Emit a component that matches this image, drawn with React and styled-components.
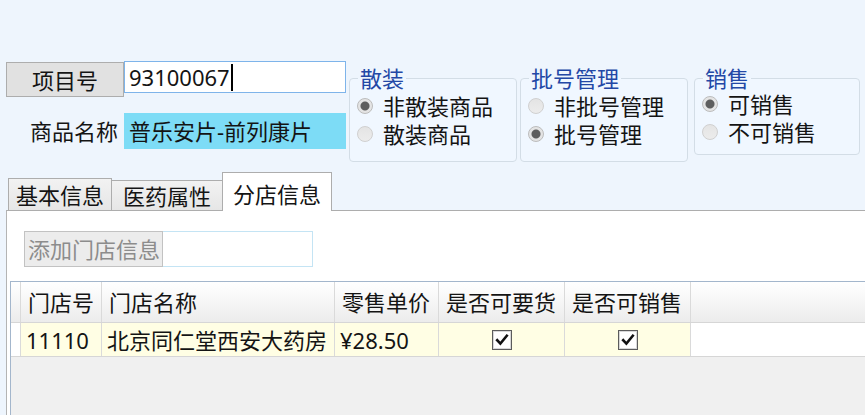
import React from "react";
import styled, { createGlobalStyle } from "styled-components";

const Global = createGlobalStyle`
  html, body { margin: 0; padding: 0; }
  body { font-family: "Noto Sans", "Noto Sans CJK SC", sans-serif; color: #1b1b1b; }
  * { box-sizing: border-box; }
`;

const FONT = `"Noto Sans", "Noto Sans CJK SC", sans-serif`;

const Root = styled.div`
  width: 865px;
  height: 415px;
  overflow: hidden;
  background: #eef5fd;
  display: flex;
  flex-direction: column;
  font-family: ${FONT};
  font-size: 22px;
  line-height: 26px;
  color: #141414;
`;

const TopSection = styled.div`
  height: 173px;
  flex: none;
  display: flex;
  align-items: flex-start;
  padding: 61px 0 0 6px;
`;

const LeftForm = styled.div`
  width: 340px;
  display: flex;
  flex-direction: column;
  gap: 16px;
`;

const FormRow = styled.div`
  display: flex;
  align-items: flex-start;
`;

const KeyButton = styled.div`
  width: 118px;
  height: 35px;
  margin-top: 1px;
  background: #e1e1e1;
  border: 1px solid #adadad;
  display: flex;
  align-items: center;
  justify-content: center;
`;

const CodeBox = styled.div`
  width: 222px;
  height: 32px;
  background: #fff;
  border: 1px solid #7eb4ea;
  display: flex;
  align-items: center;
  padding-left: 4px;
`;

const Caret = styled.span`
  width: 2px;
  height: 27px;
  background: #000;
  margin-left: 1px;
`;

const NameLabel = styled.div`
  width: 118px;
  height: 36px;
  display: flex;
  align-items: center;
  justify-content: flex-end;
  padding-right: 6px;
`;

const NameBox = styled.div`
  width: 222px;
  height: 36px;
  background: #7ddcf6;
  display: flex;
  align-items: center;
  padding-left: 5px;
`;

const Groups = styled.div`
  display: flex;
  align-items: flex-start;
  margin-left: 3px;
  margin-top: 5px;
`;

const GroupBox = styled.fieldset`
  width: ${(p) => p.$w}px;
  margin: 0 0 0 ${(p) => p.$gap}px;
  padding: ${(p) => p.$top}px 0 ${(p) => p.$bottom}px 7px;
  border: 1px solid #d3dde6;
  border-radius: 4px;
  background: #f0f7ff;
  min-width: 0;
`;

const Legend = styled.legend`
  margin-left: 1px;
  padding: 0 2px;
  font-size: 22px;
  line-height: 24px;
  color: #2348a6;
`;

const RadioRow = styled.div`
  height: 28px;
  display: flex;
  align-items: center;
  gap: 10px;
  white-space: nowrap;
`;

const RadioDot = styled.span`
  width: 16px;
  height: 16px;
  border-radius: 50%;
  flex: none;
  border: 1px solid ${(p) => (p.$on ? "#bcbcbc" : "#d0d0d0")};
  background: ${(p) =>
    p.$on
      ? "radial-gradient(circle, #5e5e5e 0, #5e5e5e 4px, #e4e4e4 5px)"
      : "linear-gradient(#e4e4e4, #ececec)"};
`;

const TabStrip = styled.div`
  height: 37px;
  flex: none;
  display: flex;
  align-items: flex-end;
  padding-left: 8px;
`;

const Tab = styled.div`
  position: relative;
  z-index: ${(p) => (p.$active ? 1 : 0)};
  height: ${(p) => (p.$active ? 39 : p.$h)}px;
  margin-bottom: ${(p) => (p.$active ? -1 : 0)}px;
  padding: 0 ${(p) => p.$pad}px;
  border: 1px solid #adadad;
  border-bottom: none;
  margin-left: ${(p) => (p.$first ? 0 : -1)}px;
  background: ${(p) => (p.$active ? "#fff" : "linear-gradient(#f2f2f2, #e6e6e6)")};
  display: flex;
  align-items: ${(p) => (p.$active ? "flex-start" : "center")};
  padding-top: ${(p) => (p.$active ? 8 : 0)}px;
  white-space: nowrap;
`;

const TabPage = styled.div`
  flex: 1;
  display: flex;
  flex-direction: column;
  margin-left: 6px;
  background: #fff;
  border-top: 1px solid #adadad;
  border-left: 1px solid #b4b4b4;
  padding: 20px 0 0 3px;
  min-height: 0;
`;

const AddRow = styled.div`
  display: flex;
  margin-left: 14px;
`;

const AddButton = styled.div`
  width: 139px;
  height: 36px;
  background: #ececec;
  border: 1px solid #c2c2c2;
  color: #8c8c8c;
  display: flex;
  align-items: center;
  padding-left: 3px;
  white-space: nowrap;
`;

const AddInput = styled.div`
  width: 150px;
  height: 36px;
  background: #fff;
  border: 1px solid #c4e4f4;
  border-left: none;
`;

const Grid = styled.div`
  flex: 1;
  margin-top: 14px;
  background: #f0f0f0;
  border-top: 1px solid #a3b6cc;
  border-left: 1px solid #a3b6cc;
  display: flex;
  flex-direction: column;
`;

const GridRow = styled.div`
  display: flex;
  height: ${(p) => p.$h}px;
  border-bottom: 1px solid #d6d6d6;
  background: ${(p) => (p.$head ? "linear-gradient(#ffffff 0%, #f7f7f7 45%, #ececec 100%)" : "#fff")};
`;

const Cell = styled.div`
  width: ${(p) => p.$w}px;
  flex: none;
  border-right: 1px solid #dadada;
  display: flex;
  align-items: center;
  justify-content: ${(p) => (p.$center ? "center" : "flex-start")};
  padding-left: ${(p) => (p.$center ? 0 : p.$pl ?? 7)}px;
  background: ${(p) => (p.$yellow ? "#fffee4" : "transparent")};
  white-space: nowrap;
`;

const Filler = styled.div`
  flex: 1;
`;

const CheckBox = styled.span`
  width: 20px;
  height: 20px;
  border: 1px solid #5c5c5c;
  box-shadow: inset 0 0 0 1px #d8d8d8;
  background: #fff;
  display: flex;
  align-items: center;
  justify-content: center;
`;

const Check = () => (
  <CheckBox>
    <svg width="14" height="14" viewBox="0 0 14 14">
      <path d="M2.2 7.2 L5.4 10.6 L11.8 2.8" fill="none" stroke="#111" strokeWidth="2.6" strokeLinecap="square" />
    </svg>
  </CheckBox>
);

const Radio = ({ on, children }) => (
  <RadioRow>
    <RadioDot $on={on} />
    {children}
  </RadioRow>
);

const cols = [
  { key: "id", title: "门店号", w: 81 },
  { key: "name", title: "门店名称", w: 233 },
  { key: "price", title: "零售单价", w: 104 },
  { key: "order", title: "是否可要货", w: 126 },
  { key: "sale", title: "是否可销售", w: 126 },
];

const row = { id: "11110", name: "北京同仁堂西安大药房", price: "¥28.50", order: true, sale: true };

export default function App() {
  return (
    <Root>
      <Global />
      <TopSection>
        <LeftForm>
          <FormRow>
            <KeyButton>项目号</KeyButton>
            <CodeBox>
              93100067
              <Caret />
            </CodeBox>
          </FormRow>
          <FormRow>
            <NameLabel>商品名称</NameLabel>
            <NameBox>普乐安片-前列康片</NameBox>
          </FormRow>
        </LeftForm>
        <Groups>
          <GroupBox $w={168} $gap={0} $top={2} $bottom={13}>
            <Legend>散装</Legend>
            <Radio on>非散装商品</Radio>
            <Radio>散装商品</Radio>
          </GroupBox>
          <GroupBox $w={168} $gap={3} $top={2} $bottom={13}>
            <Legend>批号管理</Legend>
            <Radio>非批号管理</Radio>
            <Radio on>批号管理</Radio>
          </GroupBox>
          <GroupBox $w={166} $gap={6} $top={0} $bottom={8}>
            <Legend>销售</Legend>
            <Radio on>可销售</Radio>
            <Radio>不可销售</Radio>
          </GroupBox>
        </Groups>
      </TopSection>
      <TabStrip>
        <Tab $first $h={32} $pad={7}>基本信息</Tab>
        <Tab $h={30} $pad={11}>医药属性</Tab>
        <Tab $active $pad={10}>分店信息</Tab>
      </TabStrip>
      <TabPage>
        <AddRow>
          <AddButton>添加门店信息</AddButton>
          <AddInput />
        </AddRow>
        <Grid>
          <GridRow $head $h={41}>
            <Cell $w={10} />
            {cols.map((c) => (
              <Cell key={c.key} $w={c.w}>{c.title}</Cell>
            ))}
            <Filler />
          </GridRow>
          <GridRow $h={34}>
            <Cell $w={10} />
            <Cell $w={81} $yellow $pl={5}>{row.id}</Cell>
            <Cell $w={233} $yellow $pl={5}>{row.name}</Cell>
            <Cell $w={104} $yellow $pl={5}>{row.price}</Cell>
            <Cell $w={126} $yellow $center>{row.order && <Check />}</Cell>
            <Cell $w={126} $yellow $center>{row.sale && <Check />}</Cell>
            <Filler />
          </GridRow>
        </Grid>
      </TabPage>
    </Root>
  );
}
